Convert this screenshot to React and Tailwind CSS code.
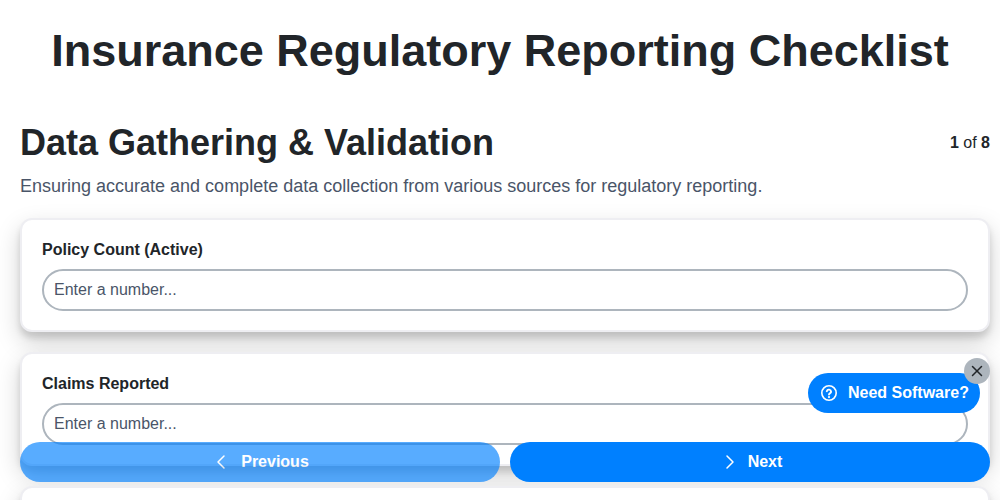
import { ChevronLeft, ChevronRight, X } from "lucide-react";

const cardClass =
  "bg-white rounded-[12px] border-2 border-[#eeeef2] px-5 pt-[18px] pb-5 h-[114px] shrink-0 shadow-[0_10px_25px_rgba(0,0,0,0.18),0_6px_6px_rgba(0,0,0,0.12)]";

const FieldCard = ({ label }) => {
  return (
    <div className={cardClass}>
      <div className="text-base font-bold text-[#212529] leading-[24px] mb-[7px]">{label}</div>
      <input
        type="text"
        placeholder="Enter a number..."
        className="w-full h-[42px] rounded-full border-2 border-[#adb5bd] bg-white px-[10px] text-base text-[#212529] placeholder:text-[#4a5568] outline-none"
      />
    </div>
  );
};

const HelpIcon = () => (
  <svg width="18" height="18" viewBox="0 0 18 18" fill="none" stroke="currentColor" strokeLinecap="round" strokeLinejoin="round">
    <circle cx="9" cy="9" r="7.2" strokeWidth="1.6" />
    <path d="M6.8 7.2a2.2 2.2 0 0 1 4.3 0.5c0 1.4-2.1 1.6-2.1 2.9" strokeWidth="1.9" />
    <path d="M9 13.1h0.01" strokeWidth="2.2" />
  </svg>
);

export default function App() {
  return (
    <div className="relative h-[500px] w-[1000px] overflow-hidden bg-white font-['Liberation_Sans',Arial,sans-serif] text-[#212529]">
      <h1 className="text-center text-[45px] font-bold leading-[54px] pt-[24px]">
        Insurance Regulatory Reporting Checklist
      </h1>

      <div className="pl-5 pr-2.5 mt-[43px]">
        {/* Section header */}
        <div className="flex justify-between items-center">
          <h2 className="text-[36px] font-bold leading-[44px]">Data Gathering &amp; Validation</h2>
          <div className="text-base leading-6">
            <strong>1</strong> of <strong>8</strong>
          </div>
        </div>
        <p className="text-lg text-[#4a5568] leading-[28px] mt-[7px] mb-[18px]">
          Ensuring accurate and complete data collection from various sources for regulatory reporting.
        </p>

        {/* Field cards, the third one only peeks in at the fold */}
        <div className="flex flex-col gap-5">
          <FieldCard label="Policy Count (Active)" />
          <FieldCard label="Claims Reported" />
          <div className={cardClass} />
        </div>
      </div>

      {/* Bottom nav */}
      <div className="absolute left-5 right-2.5 top-[442px] flex gap-2.5">
        <button className="flex-1 h-10 rounded-full bg-[#0080ff] opacity-65 text-white font-bold text-base flex items-center justify-center gap-[8px]">
          <ChevronLeft size={24} strokeWidth={1.5} className="-ml-[2px]" />
          Previous
        </button>
        <button className="flex-1 h-10 rounded-full bg-[#0080ff] text-white font-bold text-base flex items-center justify-center gap-[6px]">
          <ChevronRight size={24} strokeWidth={1.5} />
          Next
        </button>
      </div>

      {/* Software promo */}
      <div className="absolute left-[808px] top-[373px] w-[172px] h-10 rounded-full bg-[#0080ff] text-white font-bold text-base flex items-center pl-[12px] gap-[10px]">
        <HelpIcon />
        Need Software?
      </div>
      <div className="absolute left-[964px] top-[358px] w-[26px] h-[26px] rounded-full bg-[#adb5bd] flex items-center justify-center text-[#212529]">
        <X size={18} strokeWidth={2} />
      </div>
    </div>
  );
}
